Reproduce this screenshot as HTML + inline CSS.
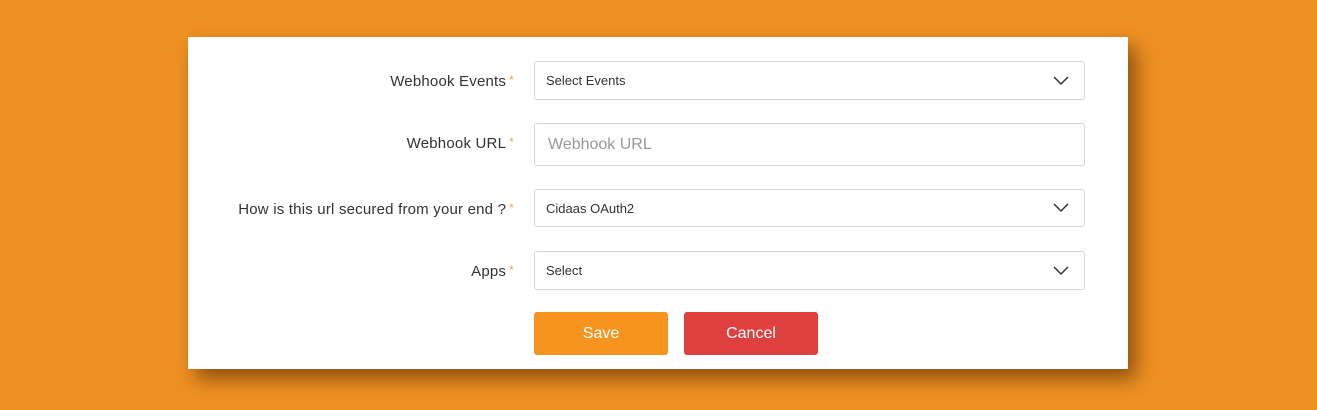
<!DOCTYPE html>
<html><head><style>
body{margin:0;width:1317px;height:410px;background:#ef9022;font-family:"Liberation Sans",sans-serif;position:relative;overflow:hidden}
.card{position:absolute;left:188px;top:37px;width:940px;height:332px;background:#fff;box-shadow:8px 10px 18px rgba(80,40,0,.6)}
.lbl{position:absolute;right:803px;font-size:15px;color:#333;text-align:right;white-space:nowrap;letter-spacing:.2px}
.lbl b{color:#f7a54a;font-weight:normal;font-size:12px;vertical-align:top;margin-left:3px}
.in{position:absolute;left:534px;width:551px;border:1px solid #d6d6d6;border-radius:3px;background:#fff;font-size:13px;color:#333;box-sizing:border-box;padding-left:11px;display:flex;align-items:center}
.in svg{position:absolute;right:15px}
.btn{position:absolute;top:312px;width:134px;height:43px;border-radius:3px;color:#fff;font-size:16px;display:flex;align-items:center;justify-content:center}
</style></head><body>
<div class="card"></div>
<div class="lbl" style="top:73px">Webhook Events<b>*</b></div>
<div class="in" style="top:61px;height:39px">Select Events<svg width="16" height="10" viewBox="0 0 16 10"><path d="M1 1l7 7 7-7" fill="none" stroke="#333" stroke-width="1.5"/></svg></div>
<div class="lbl" style="top:135px">Webhook URL<b>*</b></div>
<div class="in" style="top:123px;height:43px;font-size:16px;color:#999;padding-left:13px">Webhook URL</div>
<div class="lbl" style="top:201px">How is this url secured from your end ?<b>*</b></div>
<div class="in" style="top:189px;height:38px">Cidaas OAuth2<svg width="16" height="10" viewBox="0 0 16 10"><path d="M1 1l7 7 7-7" fill="none" stroke="#333" stroke-width="1.5"/></svg></div>
<div class="lbl" style="top:263px">Apps<b>*</b></div>
<div class="in" style="top:251px;height:39px">Select<svg width="16" height="10" viewBox="0 0 16 10"><path d="M1 1l7 7 7-7" fill="none" stroke="#333" stroke-width="1.5"/></svg></div>
<div class="btn" style="left:534px;background:#f7941e">Save</div>
<div class="btn" style="left:684px;background:#de4040">Cancel</div>
</body></html>
